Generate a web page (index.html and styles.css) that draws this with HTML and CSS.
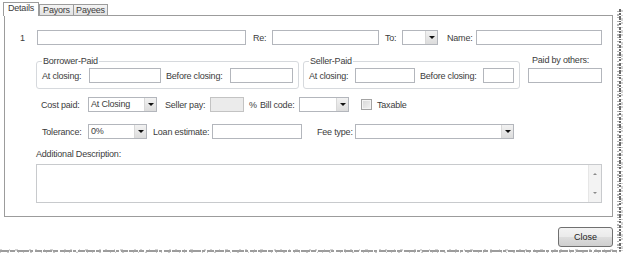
FILE: index.html
```html
<!DOCTYPE html>
<html>
<head>
	<title>Fee details</title>
	<link rel="stylesheet" href="styles.css">
</head>

<body>

<div class="win">
	<!-- tab strip -->
	<div class="tabs">
		<div class="tab on">Details</div>
		<div class="tab t-payors">Payors</div>
		<div class="tab t-payees">Payees</div>
	</div>

	<div class="panel">
		<div class="row r-top">
			<span class="lbl l-num">1</span>
			<input class="in in-desc" type="text">
			<span class="lbl l-re">Re:</span>
			<input class="in in-re" type="text">
			<span class="lbl l-to">To:</span>
			<div class="combo cb-to"><span class="val"></span><span class="arr"></span></div>
			<span class="lbl l-name">Name:</span>
			<input class="in in-name" type="text">
		</div>

		<div class="r-groups">
			<fieldset class="grp">
				<legend>Borrower-Paid</legend>
				<div class="grp-row">
					<span class="lbl l-at">At closing:</span>
					<input class="in in-bat" type="text">
					<span class="lbl l-before">Before closing:</span>
					<input class="in in-bbefore" type="text">
				</div>
			</fieldset>
			<fieldset class="grp grp-s">
				<legend>Seller-Paid</legend>
				<div class="grp-row">
					<span class="lbl l-at2">At closing:</span>
					<input class="in in-sat" type="text">
					<span class="lbl l-before2">Before closing:</span>
					<input class="in in-sbefore" type="text">
				</div>
			</fieldset>
			<div class="others">
				<span class="others-lbl">Paid by others:</span>
				<input class="in in-others" type="text">
			</div>
		</div>

		<div class="row r-cost">
			<span class="lbl l-cost">Cost paid:</span>
			<div class="combo cb-cost"><span class="val">At Closing</span><span class="arr"></span></div>
			<span class="lbl l-spay">Seller pay:</span>
			<input class="in in-spay" type="text" disabled>
			<span class="lbl l-pct">%</span>
			<span class="lbl l-bill">Bill code:</span>
			<div class="combo cb-bill"><span class="val"></span><span class="arr"></span></div>
			<span class="chk"></span>
			<span class="lbl l-tax">Taxable</span>
		</div>

		<div class="row r-tol">
			<span class="lbl l-tol">Tolerance:</span>
			<div class="combo cb-tol"><span class="val">0%</span><span class="arr"></span></div>
			<span class="lbl l-loan">Loan estimate:</span>
			<input class="in in-loan" type="text">
			<span class="lbl l-fee">Fee type:</span>
			<div class="combo cb-fee"><span class="val"></span><span class="arr"></span></div>
		</div>

		<div class="desc-lbl">Additional Description:</div>
		<div class="desc-box">
			<div class="scroll"><span class="up"></span><span class="down"></span></div>
		</div>
	</div>

	<div class="foot">
		<button class="btn-close">Close</button>
	</div>

	<!-- torn paper edge of the screenshot -->
	<svg class="torn" width="624" height="263" viewBox="0 0 624 263">
		<path d="M620 9 V251" stroke="#6a6a6a" stroke-width="2" stroke-dasharray="3 1 2 1 4 1 1 1 2 2" fill="none"/>
		<path d="M618 11 V251" stroke="#9a9a9a" stroke-width="1.5" stroke-dasharray="1 2 2 1 1 3" fill="none"/>
		<path d="M622 10 V251" stroke="#a8a8a8" stroke-width="1" stroke-dasharray="2 3 1 2 3 1" fill="none"/>
		<path d="M0 251 H621" stroke="#7c7c7c" stroke-width="1.3" stroke-dasharray="9 1 5 2 12 1 3 2 7 1" fill="none"/>
		<path d="M0 250 H620" stroke="#a6a6a6" stroke-width="1" stroke-dasharray="2 7 1 5 3 11 2 4" fill="none"/>
		<path d="M0 252.3 H620" stroke="#bdbdbd" stroke-width="1" stroke-dasharray="1 6 2 9 1 4" fill="none"/>
	</svg>
</div>

</body>
</html>
```

FILE: styles.css
```css
* {
    box-sizing: border-box;
}

body {
    margin: 0;
    background: #fff;
    font-family: "Liberation Sans", Arial, sans-serif;
    font-size: 9px;
    letter-spacing: -0.2px;
    color: #3c3c3c;
}

.win {
    position: relative;
    width: 624px;
    height: 263px;
    overflow: hidden;
}

/* tabs */
.tabs {
    display: flex;
    align-items: flex-end;
    height: 15px;
    padding-left: 3px;
}

.tab {
    height: 11px;
    line-height: 10px;
    text-align: center;
    border: 1px solid #9c9c9c;
    border-bottom: none;
    background: linear-gradient(#f4f4f4, #e2e2e2);
}

.tab.on {
    position: relative;
    z-index: 1;
    width: 36px;
    height: 14px;
    line-height: 11px;
    margin-bottom: -1px;
    background: #fff;
}

.t-payors { width: 35px; }
.t-payees { width: 34px; border-left: none; }

.panel {
    margin-left: 4px;
    width: 609px;
    height: 202px;
    border: 1px solid #9c9c9c;
}

.row {
    display: flex;
    align-items: center;
    height: 15px;
}

.lbl {
    flex: none;
    white-space: nowrap;
}

.in {
    flex: none;
    height: 15px;
    margin: 0;
    padding: 0 2px;
    border: 1px solid #b3b6bc;
    background: #fff;
    font: inherit;
    outline: none;
}

.in:disabled {
    background: #ebebeb;
    border-color: #c3c3c3;
}

.combo {
    flex: none;
    display: flex;
    height: 15px;
    border: 1px solid #b3b6bc;
    background: #fff;
}

.combo .val {
    flex: 1;
    padding-left: 2px;
    line-height: 13px;
    white-space: nowrap;
}

.combo .arr {
    width: 12px;
    display: flex;
    align-items: center;
    justify-content: center;
    border-left: 1px solid #d8d8d8;
    background: linear-gradient(#f2f2f2, #dcdcdc);
}

.combo .arr::after {
    content: "";
    border-left: 3px solid transparent;
    border-right: 3px solid transparent;
    border-top: 3px solid #111;
}

/* row 1 */
.r-top { margin-top: 14px; padding-left: 15px; }
.l-num { width: 17px; }
.in-desc { width: 209px; }
.l-re { width: 26px; padding-left: 7px; }
.in-re { width: 107px; }
.l-to { width: 23px; padding-left: 6px; }
.cb-to { width: 36px; }
.l-name { width: 38px; padding-left: 9px; }
.in-name { width: 126px; }

/* groups */
.r-groups {
    display: flex;
    align-items: flex-start;
    margin-top: 11px;
    padding-left: 31px;
}

.grp {
    margin: 0;
    padding: 1px 5px 5px 5px;
    border: 1px solid #d6d9dd;
    border-radius: 3px;
}

.grp legend {
    padding: 0 1px;
    line-height: 11px;
}

.grp-s { margin-left: 4px; }

.grp-row {
    display: flex;
    align-items: center;
    height: 15px;
}

.l-at { width: 47px; }
.in-bat { width: 72px; }
.l-before { width: 69px; padding-left: 5px; }
.in-bbefore { width: 63px; }
.l-at2 { width: 46px; }
.in-sat { width: 60px; }
.l-before2 { width: 68px; padding-left: 5px; }
.in-sbefore { width: 31px; }

.others {
    display: flex;
    flex-direction: column;
    margin-left: 8px;
}

.others-lbl {
    line-height: 9px;
    margin-bottom: 3px;
    padding-left: 4px;
}

.in-others { width: 74px; }

/* cost row */
.r-cost { margin-top: 8px; padding-left: 36px; }
.l-cost { width: 47px; }
.cb-cost { width: 69px; }
.l-spay { width: 53px; padding-left: 8px; }
.in-spay { width: 34px; }
.l-pct { width: 11px; padding-left: 5px; }
.l-bill { width: 44px; padding-left: 5px; }
.cb-bill { width: 50px; }
.chk {
    flex: none;
    width: 11px;
    height: 11px;
    margin-left: 12px;
    border: 1px solid #a3a3a3;
    background: linear-gradient(135deg, #d6d6d6, #f3f3f3);
    box-shadow: inset 0 0 0 1px #f4f4f4;
}
.l-tax { padding-left: 5px; }

/* tolerance row */
.r-tol { margin-top: 12px; padding-left: 37px; }
.l-tol { width: 46px; }
.cb-tol { width: 59px; }
.l-loan { width: 65px; padding-left: 6px; }
.in-loan { width: 90px; }
.l-fee { width: 53px; padding-left: 15px; }
.cb-fee { width: 159px; }

/* description */
.desc-lbl {
    margin-top: 10px;
    padding-left: 31px;
    line-height: 11px;
}

.desc-box {
    display: flex;
    justify-content: flex-end;
    margin: 4px 0 0 31px;
    width: 566px;
    height: 39px;
    border: 1px solid #c8cacd;
}

.scroll {
    width: 13px;
    display: flex;
    flex-direction: column;
    justify-content: space-between;
    align-items: center;
    padding: 8px 0 8px;
    background: #f3f3f3;
    border-left: 1px solid #e6e6e6;
}

.scroll .up {
    border-left: 2px solid transparent;
    border-right: 2px solid transparent;
    border-bottom: 2px solid #8a8a8a;
}

.scroll .down {
    border-left: 2px solid transparent;
    border-right: 2px solid transparent;
    border-top: 2px solid #8a8a8a;
}

/* footer */
.foot {
    display: flex;
    justify-content: flex-end;
    margin-top: 10px;
    padding-right: 11px;
}

.btn-close {
    width: 55px;
    height: 20px;
    padding: 0;
    border: 1px solid #707070;
    border-radius: 3px;
    background: linear-gradient(#f3f3f3 0%, #ebebeb 48%, #dddddd 52%, #cfcfcf 100%);
    font: inherit;
    color: #222;
}

.torn {
    position: absolute;
    left: 0;
    top: 0;
    pointer-events: none;
}
```
